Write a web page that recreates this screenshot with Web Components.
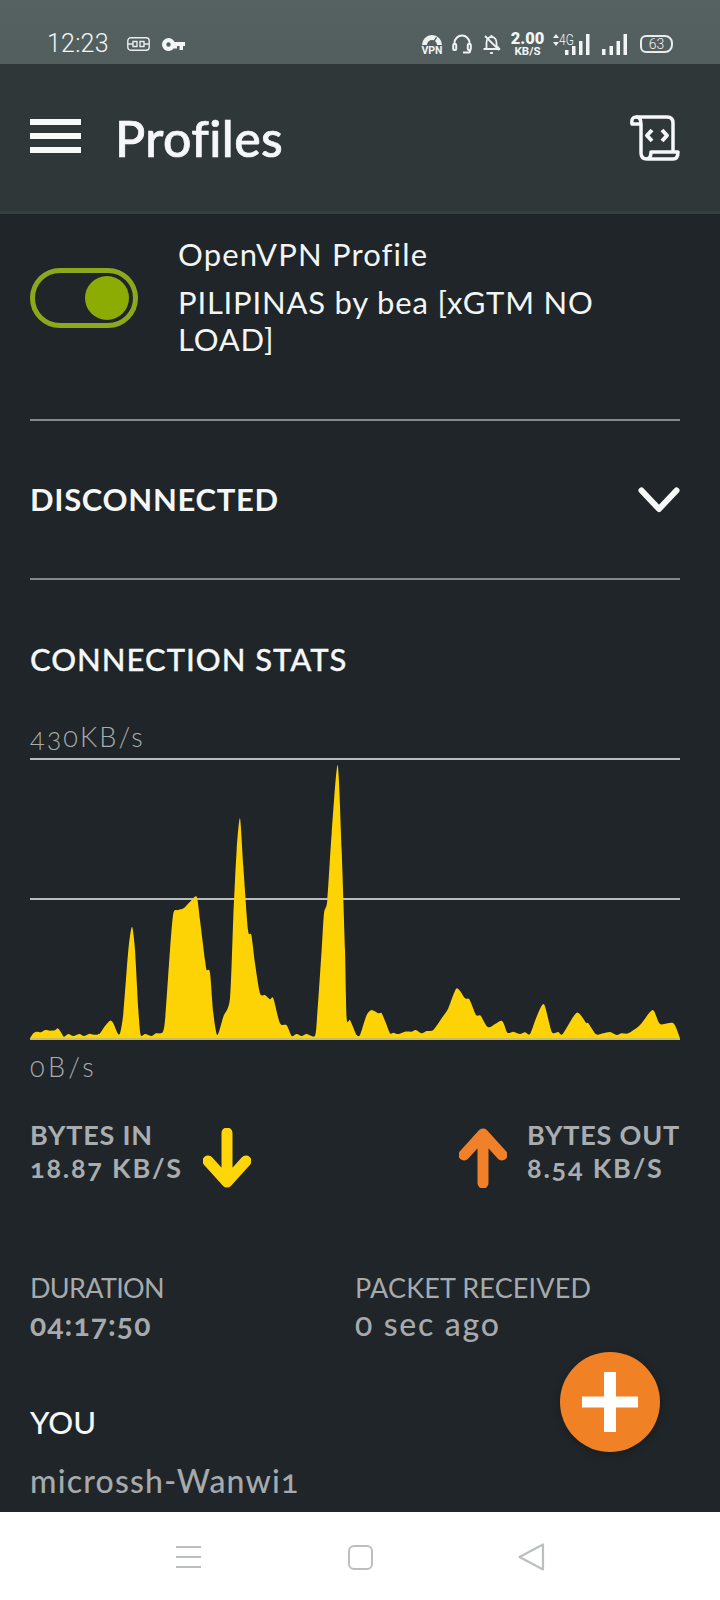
<!DOCTYPE html>
<html>
<head>
<meta charset="utf-8">
<title>Profiles</title>
<style>
    html, body { margin: 0; padding: 0; background: #1f2528; }
    body { width: 720px; height: 1600px; overflow: hidden; font-family: Lato, "Open Sans", sans-serif; font-variant-numeric: oldstyle-nums; }
    app-screen { width: 720px; height: 1600px; }
</style>
</head>
<body>
<app-screen>
    <status-bar></status-bar>
    <app-bar title="Profiles"></app-bar>
    <main-panel>
        <profile-row name="OpenVPN Profile" detail="PILIPINAS by bea [xGTM NO LOAD]"></profile-row>
        <state-row label="DISCONNECTED"></state-row>
        <traffic-chart></traffic-chart>
        <rate-row></rate-row>
        <info-row></info-row>
        <you-block name="microssh-Wanwi1"></you-block>
    </main-panel>
    <add-button></add-button>
    <nav-bar></nav-bar>
</app-screen>

<script>
class ShadowPart extends HTMLElement {
    CSS = "";
    markup() { return ""; }

    connectedCallback() {
        if (this.shadowRoot) return;
        const template = document.createElement("template");
        template.innerHTML = `<style>${this.CSS}</style>${this.markup()}`;
        this.attachShadow({ mode: "open" });
        this.shadowRoot.appendChild(template.content.cloneNode(true));
    }
}

class AppScreen extends ShadowPart {
    CSS = `:host { display: flex; flex-direction: column; position: relative; overflow: hidden; }`;
    markup() { return `<slot></slot>`; }
}

class StatusBar extends ShadowPart {
    CSS = `:host {
        display: flex;
        align-items: center;
        height: 64px;
        box-sizing: border-box;
        padding: 24px 47px 0 47px;
        background: linear-gradient(#566260, #525e5e);
        color: #f2f5f4;
        font-family: Roboto, sans-serif;
        font-variant-numeric: normal;
    }
    .time { font-size: 25px; font-weight: 300; line-height: 40px; letter-spacing: .2px; }
    svg { display: block; flex: none; }
    .left { display: flex; align-items: center; gap: 12px; margin-left: 18px; }
    .right { display: flex; align-items: center; margin-left: auto; }
    .speed { display: flex; flex-direction: column; align-items: center; width: 33px; margin-left: 10px; font-weight: 700; }
    .speed b { font-size: 16.5px; line-height: 14px; }
    .speed i { font-style: normal; font-size: 11.5px; line-height: 11px; }
    .net { position: relative; width: 38px; height: 24px; margin-left: 8px; }
    .net span { position: absolute; left: 7px; top: -1px; font-size: 15px; line-height: 18px; font-weight: 300; transform: scaleX(.8); transform-origin: left; }
    .net svg { position: absolute; left: 0; top: 1px; }
    .battery { position: relative; width: 33px; height: 18px; margin-left: 12px; box-sizing: border-box; border: 2px solid #e8ecec; border-radius: 6px 8px 8px 6px; display: flex; align-items: center; justify-content: center; font-size: 14px; font-weight: 300; line-height: 14px; }
    .vpn { position: relative; width: 22px; height: 23px; }
    .vpn span { position: absolute; left: 0; right: 0; top: 12px; text-align: center; font-size: 10.5px; line-height: 11px; font-weight: 700; }`;
    markup() {
        return `
        <span class="time">12:23</span>
        <div class="left">
            <svg width="23" height="14" viewBox="0 0 23 14" fill="none" stroke="#e9eded" stroke-width="1.4">
                <rect x=".8" y=".8" width="21.4" height="12.4" rx="3"/>
                <path d="M1 7h5M17 7h5M6 4.500h4v5H6zM13 4.500h4v5h-4z"/>
            </svg>
            <svg width="23" height="13" viewBox="0 0 23 13" fill="#f4f6f6">
                <path d="M6.500 0a6.500 6.500 0 1 1-6.100 8.600 6.500 6.500 0 0 1 6.100-8.600zm0 4.300a2.200 2.200 0 1 0 0 4.400 2.200 2.200 0 0 0 0-4.400z"/>
                <path d="M12 4h11v4h-2v4h-3.500V8H15v2.500h-3z"/>
            </svg>
        </div>
        <div class="right">
            <div class="vpn">
                <svg width="22" height="13" viewBox="0 0 22 13" fill="#eef1f1">
                    <path d="M1 12a10 10 0 0 1 20 0h-5a5 5 0 0 0-10 0z"/>
                    <path d="M11 10l4-6 1.200.8-4 6z" fill="#566260"/>
                </svg>
                <span>VPN</span>
            </div>
            <svg style="margin-left:9px" width="20" height="20" viewBox="0 0 20 20" fill="none" stroke="#f0f3f3" stroke-width="2">
                <path d="M2.500 11V9a7.500 7.500 0 0 1 15 0v2"/>
                <rect x="1.200" y="10" width="3" height="6" rx="1"/>
                <rect x="15.800" y="10" width="3" height="6" rx="1"/>
                <path d="M18 16v1.500a1 1 0 0 1-1 1h-6"/>
            </svg>
            <svg style="margin-left:10px" width="19" height="21" viewBox="0 0 19 21" fill="none" stroke="#eef1f1" stroke-width="1.800" stroke-linejoin="round">
                <path d="M4.500 15V9c0-3.500 2-6 5-6s5 2.500 5 6v2.500l3 3.500H1.500"/>
                <path d="M3 2l14 14"/>
                <path d="M8 19h3"/>
                <path d="M9.500 1v2"/>
            </svg>
            <div class="speed"><b>2.00</b><i>KB/S</i></div>
            <div class="net">
                <svg width="8" height="14" viewBox="0 0 8 14" fill="#eef1f1"><path d="M4 1l3 4H1zM4 13l3-4H1z"/></svg>
                <span>4G</span>
            </div>
            <svg style="margin-left:-26px;position:relative" width="26" height="21" viewBox="0 0 26 21" fill="#f2f5f4">
                <rect x="1" y="16" width="3.500" height="5"/><rect x="8" y="12" width="3.500" height="9"/><rect x="15" y="7" width="3.500" height="14"/><rect x="22" y="0" width="3.500" height="21"/>
            </svg>
            <svg style="margin-left:11px" width="27" height="21" viewBox="0 0 27 21" fill="#f2f5f4">
                <rect x="1" y="15" width="3.500" height="6"/><rect x="8.500" y="12" width="3.500" height="9"/><rect x="15.500" y="7" width="3.500" height="14"/><rect x="22.500" y="0" width="3.500" height="21"/>
            </svg>
            <div class="battery">63</div>
        </div>`;
    }
}

class AppBar extends ShadowPart {
    CSS = `:host {
        display: flex;
        align-items: center;
        height: 150px;
        box-sizing: border-box;
        padding: 0 40px 0 30px;
        background: #2f3739;
        border-bottom: 3px solid #363e40;
        color: #f5f7f8;
    }
    .menu { width: 51px; height: 34px; display: flex; flex-direction: column; justify-content: space-between; margin-right: 34px; margin-top: -4px; }
    .menu i { display: block; height: 6px; background: #f7f9f9; }
    h1 { margin: 0; font-size: 50px; font-weight: 500; line-height: 56px; letter-spacing: .4px; -webkit-text-stroke: .7px #f5f7f8; }
    svg { margin-left: auto; margin-top: 0; display: block; }`;
    markup() {
        return `
        <div class="menu"><i></i><i></i><i></i></div>
        <h1>${this.getAttribute("title")}</h1>
        <svg width="50" height="46" viewBox="0 0 50 46" fill="none" stroke="#f5f7f8" stroke-width="3.500" stroke-linejoin="round">
            <path d="M6 2h31q6 0 6 6v29"/>
            <path d="M11 9v29q0 6 6 6h26q5 0 5-7H21q0 7-5 7"/>
            <path d="M11 9H2q-1-7 4-7t5 7"/>
            <path d="M22 15l-5 5.500 5 5.500M32 15l5 5.500-5 5.500" stroke-width="4"/>
        </svg>`;
    }
}

class MainPanel extends ShadowPart {
    CSS = `:host {
        display: block;
        height: 1298px;
        box-sizing: border-box;
        padding: 0 40px 0 30px;
        background: #1f2528;
        overflow: hidden;
    }`;
    markup() { return `<slot></slot>`; }
}

class ToggleSwitch extends ShadowPart {
    CSS = `:host {
        display: flex;
        align-items: center;
        justify-content: flex-end;
        width: 108px;
        height: 60px;
        box-sizing: border-box;
        padding-right: 4px;
        border: 5px solid #8ea81c;
        border-radius: 30px;
    }
    i { display: block; width: 44px; height: 44px; border-radius: 50%; background: #8cab03; }`;
    markup() { return `<i></i>`; }
}
class ProfileRow extends ShadowPart {
    CSS = `:host {
        display: flex;
        height: 207px;
        box-sizing: border-box;
        padding-top: 22px;
        border-bottom: 2px solid #84888a;
        color: #f3f5f5;
        font-size: 31px;
        line-height: 37px;
    }
    toggle-switch { flex: none; margin: 32px 40px 0 0; }
    .name { letter-spacing: 1.15px; margin-bottom: 11px; }
    .detail { letter-spacing: .8px; width: 460px; }`;
    markup() {
        return `
        <toggle-switch></toggle-switch>
        <div>
            <div class="name">${this.getAttribute("name")}</div>
            <div class="detail">${this.getAttribute("detail")}</div>
        </div>`;
    }
}

class StateRow extends ShadowPart {
    CSS = `:host {
        display: flex;
        align-items: center;
        justify-content: space-between;
        height: 159px;
        box-sizing: border-box;
        border-bottom: 2px solid #84888a;
        color: #f5f7f7;
        font-size: 31px;
        font-weight: 700;
        line-height: 37px;
        letter-spacing: .7px;
    }
    svg { display: block; }`;
    markup() {
        return `
        <span>${this.getAttribute("label")}</span>
        <svg width="42" height="26" viewBox="0 0 42 26" fill="none" stroke="#f7f9f9" stroke-width="6" stroke-linecap="round" stroke-linejoin="round">
            <path d="M3.500 3.500L21 22 38.500 3.500"/>
        </svg>`;
    }
}

// points read off the reference in 3x units, left to right
const TRAFFIC = [
    [0,841],[10,826],[20,821],[32,823],[45,816],[60,818],[75,817],[83,811],[92,821],[102,836],[115,828],[130,834],[148,828],[162,834],[178,827],[192,830],[208,828],[225,804],[240,788],[250,796],[262,824],[270,826],[280,766],[295,576],[306,506],[315,576],[325,756],[332,831],[345,828],[365,834],[378,826],[398,823],[406,776],[420,576],[430,466],[445,456],[462,450],[480,431],[500,416],[510,486],[525,606],[530,636],[540,644],[550,766],[562,831],[580,776],[600,721],[610,476],[620,276],[630,181],[640,326],[654,516],[664,531],[675,616],[690,706],[705,711],[720,724],[730,721],[750,796],[770,802],[785,834],[800,828],[815,834],[830,828],[855,833],[862,766],[875,576],[882,466],[892,426],[905,226],[923,21],[935,276],[945,576],[950,781],[960,786],[975,821],
    [980,831],[990,831],[1010,771],[1025,756],[1045,766],[1055,766],[1068,796],[1080,826],[1090,824],[1105,828],[1125,821],[1145,821],[1157,816],[1175,826],[1190,819],[1210,816],[1235,781],[1255,751],[1280,691],[1305,721],[1318,724],[1338,771],[1352,773],[1375,808],[1415,788],[1432,824],[1450,821],[1470,828],[1485,823],[1500,828],[1520,776],[1542,739],[1565,821],[1585,822],[1598,828],[1640,764],[1668,794],[1675,796],[1698,829],[1720,826],[1740,822],[1760,831],[1775,826],[1795,826],[1830,801],[1868,756],[1890,798],[1930,796],[1950,841]
];

// catmull-rom through the points, so the hills are round like the real graph
function smoothPath(pts) {
    let d = `M0 843L${pts[0][0]} ${pts[0][1]}`;
    for (let i = 0; i < pts.length - 1; i++) {
        const p0 = pts[i - 1] || pts[i], p1 = pts[i], p2 = pts[i + 1], p3 = pts[i + 2] || p2;
        const c1x = p1[0] + (p2[0] - p0[0]) / 8, c1y = p1[1] + (p2[1] - p0[1]) / 8;
        const c2x = p2[0] - (p3[0] - p1[0]) / 8, c2y = p2[1] - (p3[1] - p1[1]) / 8;
        d += `C${c1x} ${c1y} ${c2x} ${c2y} ${p2[0]} ${p2[1]}`;
    }
    return d + "L1950 843Z";
}

class TrafficChart extends ShadowPart {
    CSS = `:host { display: block; color: #a8acae; }
    h2 { margin: 0; padding-top: 61px; height: 37px; font-size: 31px; font-weight: 500; line-height: 37px; color: #f5f7f7; letter-spacing: 1px; -webkit-text-stroke: .3px #f5f7f7; }
    .max, .min { font-size: 27px; line-height: 32px; font-weight: 300; }
    .max { margin-top: 43px; letter-spacing: 2.100px; }
    .min { margin-top: 10px; letter-spacing: 3.300px; }
    .plot { display: block; margin-top: 5px; }`;
    markup() {
        return `
        <h2>CONNECTION STATS</h2>
        <div class="max">430KB/s</div>
        <svg class="plot" width="650" height="283" viewBox="0 0 1950 849">
            <path d="M0 3H1950M0 423H1950" stroke="#b9bcbd" stroke-width="6"/>
            <path d="${smoothPath(TRAFFIC)}" fill="#fdd306"/>
            <path d="M0 843H1950" stroke="#c9bd62" stroke-width="6"/>
        </svg>
        <div class="min">0B/s</div>`;
    }
}

class RateStat extends ShadowPart {
    CSS = `:host { display: flex; align-items: flex-start; color: #a9adaf; font-size: 27px; font-weight: 700; line-height: 33px; }
    svg { display: block; flex: none; margin-top: 10px; }
    .l { letter-spacing: .8px; }
    .v { letter-spacing: 1.8px; }`;
    markup() {
        const up = this.getAttribute("dir") === "up";
        const arrow = up
            ? `<svg style="margin-right:20px" width="48" height="60" viewBox="0 0 48 60" fill="none" stroke="#f0802a" stroke-width="11" stroke-linecap="round" stroke-linejoin="round"><path d="M24 55V6M5 27L24 6 43 27"/></svg>`
            : `<svg style="margin-left:20px" width="48" height="60" viewBox="0 0 48 60" fill="none" stroke="#ffd60a" stroke-width="11" stroke-linecap="round" stroke-linejoin="round"><path d="M24 5V54M5 33L24 54 43 33"/></svg>`;
        const text = `<div><div class="l">${this.getAttribute("label")}</div><div class="v">${this.getAttribute("value")}</div></div>`;
        return up ? arrow + text : text + arrow;
    }
}

class RateRow extends ShadowPart {
    CSS = `:host { display: flex; justify-content: space-between; padding-top: 35px; height: 152px; }`;
    markup() {
        return `
        <rate-stat dir="down" label="BYTES IN" value="18.87 KB/S"></rate-stat>
        <rate-stat dir="up" label="BYTES OUT" value="8.54 KB/S"></rate-stat>`;
    }
}

class InfoRow extends ShadowPart {
    CSS = `:host { display: flex; font-size: 27px; color: #a6aaac; line-height: 36px; }
    .duration { width: 325px; flex: none; }
    .k { font-weight: 400; letter-spacing: .15px; }
    .duration .k { letter-spacing: -.7px; }
    .v { font-weight: 700; font-size: 30px; margin-top: 0; letter-spacing: 1.1px; }
    .ago { font-weight: 500; font-size: 32px; letter-spacing: 1.7px; }`;
    markup() {
        return `
        <section class="duration"><div class="k">DURATION</div><div class="v">04:17:50</div></section>
        <section><div class="k">PACKET RECEIVED</div><div class="v ago">0 sec ago</div></section>`;
    }
}

class YouBlock extends ShadowPart {
    CSS = `:host { display: block; padding-top: 62px; }
    .t { color: #f5f7f7; font-size: 31px; line-height: 37px; font-weight: 500; }
    .n { color: #a6aaac; font-size: 32px; line-height: 37px; font-weight: 500; margin-top: 21px; letter-spacing: 1.2px; }`;
    markup() {
        return `<div class="t">YOU</div><div class="n">${this.getAttribute("name")}</div>`;
    }
}

class AddButton extends ShadowPart {
    CSS = `:host {
        position: absolute;
        left: 560px;
        top: 1352px;
        width: 100px;
        height: 100px;
        border-radius: 50%;
        background: #f08125;
        box-shadow: 0 2px 8px rgba(0,0,0,.25);
        display: flex;
        align-items: center;
        justify-content: center;
    }
    svg { display: block; }`;
    markup() {
        return `<svg width="56" height="60" viewBox="0 0 56 60" fill="#fff"><path d="M22 0h12v24.500h22v11H34V60H22V35.500H0v-11h22z"/></svg>`;
    }
}

class NavBar extends ShadowPart {
    CSS = `:host {
        display: flex;
        align-items: center;
        height: 88px;
        box-sizing: border-box;
        padding: 0 0 0 176px;
        background: #fff;
    }
    svg { display: block; flex: none; }`;
    markup() {
        return `
        <svg style="margin-top:2px" width="25" height="22" viewBox="0 0 25 22" stroke="#bcbfc0" stroke-width="2" fill="none"><path d="M0 1H25M0 11H25M0 21H25"/></svg>
        <svg style="margin:2px 0 0 147px" width="25" height="25" viewBox="0 0 25 25" stroke="#bcbfc0" stroke-width="2" fill="none"><rect x="1" y="1" width="23" height="23" rx="5"/></svg>
        <svg style="margin:2px 0 0 145px" width="27" height="28" viewBox="0 0 27 28" stroke="#bcbfc0" stroke-width="2.200" fill="none" stroke-linejoin="round"><path d="M25 1.500V26.500L1.500 14z"/></svg>`;
    }
}

customElements.define("app-screen", AppScreen);
customElements.define("status-bar", StatusBar);
customElements.define("app-bar", AppBar);
customElements.define("main-panel", MainPanel);
customElements.define("toggle-switch", ToggleSwitch);
customElements.define("profile-row", ProfileRow);
customElements.define("state-row", StateRow);
customElements.define("traffic-chart", TrafficChart);
customElements.define("rate-stat", RateStat);
customElements.define("rate-row", RateRow);
customElements.define("info-row", InfoRow);
customElements.define("you-block", YouBlock);
customElements.define("add-button", AddButton);
customElements.define("nav-bar", NavBar);
</script>
</body>
</html>
